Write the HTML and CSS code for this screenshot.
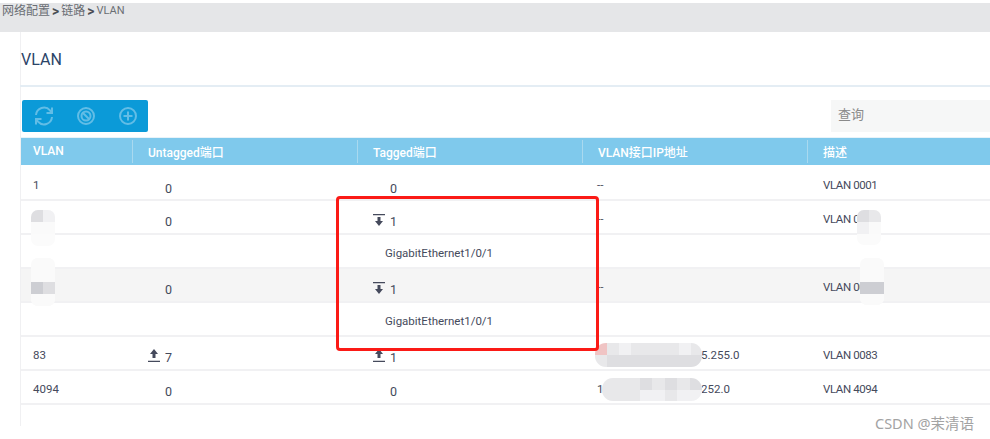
FILE: index.html
```html
<!DOCTYPE html>
<html lang="en">
<head>
    <meta charset="UTF-8">
    <meta name="viewport" content="width=device-width, initial-scale=1.0">
    <title>VLAN</title>
    <link rel="stylesheet" href="styles.css">
</head>
<body>
    <div class="breadcrumb">
        <span>网络配置</span><b>&gt;</b><span>链路</span><b>&gt;</b><span class="crumb-last">VLAN</span>
    </div>

    <div class="main">
        <h1>VLAN</h1>

        <div class="toolbar">
            <div class="btn-group">
                <svg width="20" height="22" viewBox="1 0 20 22" fill="none">
                    <path d="M3 10a8 8 0 0 1 14-4.600l1.500 2M19 12a8 8 0 0 1-14 4.600l-1.500-2"/>
                    <path d="M19 2.500v5.500h-5.500M3 19.500v-5.500h5.500"/>
                </svg>
                <svg width="20" height="20" viewBox="0 0 20 20" fill="none">
                    <circle cx="10" cy="10" r="8"/>
                    <circle cx="10" cy="10" r="4.500"/>
                    <path d="M6.500 6.500l7 7"/>
                </svg>
                <svg width="20" height="20" viewBox="0 0 20 20" fill="none">
                    <circle cx="10" cy="10" r="8"/>
                    <path d="M10 5.500v9M5.500 10h9"/>
                </svg>
            </div>
            <div class="search">查询</div>
        </div>

        <table class="vlan-table">
            <colgroup>
                <col class="col-id">
                <col class="col-port">
                <col class="col-port">
                <col class="col-port">
                <col class="col-desc">
            </colgroup>
            <thead>
                <tr>
                    <th>VLAN</th>
                    <th>Untagged端口</th>
                    <th>Tagged端口</th>
                    <th>VLAN接口IP地址</th>
                    <th>描述</th>
                </tr>
            </thead>
            <tbody>
                <tr>
                    <td>1</td>
                    <td class="num">0</td>
                    <td class="num">0</td>
                    <td>--</td>
                    <td class="desc">VLAN 0001</td>
                </tr>
                <tr>
                    <td></td>
                    <td class="num">0</td>
                    <td class="num">
                        <svg class="port-icon" width="13" height="14" viewBox="0 0 13 14"><path d="M0 1h12v1.300H0zM4.500 4h3v4H10l-4 5-4-5h2.500z"/></svg>1
                    </td>
                    <td>--</td>
                    <td class="desc">VLAN 0</td>
                </tr>
                <tr>
                    <td></td>
                    <td></td>
                    <td class="port-name">GigabitEthernet1/0/1</td>
                    <td></td>
                    <td></td>
                </tr>
                <tr class="selected">
                    <td></td>
                    <td class="num">0</td>
                    <td class="num">
                        <svg class="port-icon" width="13" height="14" viewBox="0 0 13 14"><path d="M0 1h12v1.300H0zM4.500 4h3v4H10l-4 5-4-5h2.500z"/></svg>1
                    </td>
                    <td>--</td>
                    <td class="desc">VLAN 00</td>
                </tr>
                <tr>
                    <td></td>
                    <td></td>
                    <td class="port-name">GigabitEthernet1/0/1</td>
                    <td></td>
                    <td></td>
                </tr>
                <tr>
                    <td>83</td>
                    <td class="num">
                        <svg class="port-icon" width="13" height="14" viewBox="0 0 13 14"><path d="M6 0l4 5H7.500v4h-3V5H2zM0 11.700h12V13H0z"/></svg>7
                    </td>
                    <td class="num">
                        <svg class="port-icon" width="13" height="14" viewBox="0 0 13 14"><path d="M6 0l4 5H7.500v4h-3V5H2zM0 11.700h12V13H0z"/></svg>1
                    </td>
                    <td><span class="ip-head"></span>5.255.0</td>
                    <td class="desc">VLAN 0083</td>
                </tr>
                <tr>
                    <td>4094</td>
                    <td class="num">0</td>
                    <td class="num">0</td>
                    <td><span class="ip-head">1</span>252.0</td>
                    <td class="desc">VLAN 4094</td>
                </tr>
            </tbody>
        </table>
    </div>

    <!-- mosaic patches pasted over the screenshot -->
    <div class="blur blur-a">
        <i class="s3"></i><i class="s1"></i><i class="s0"></i><i class="s0"></i>
    </div>
    <div class="blur blur-b">
        <i class="s0"></i><i class="s0"></i><i class="s0"></i><i class="s0"></i>
        <i class="s4"></i><i class="s3"></i><i class="s0"></i><i class="s0"></i>
    </div>
    <div class="blur blur-c">
        <i class="s3"></i><i class="s2"></i><i class="s1"></i><i class="s0"></i>
    </div>
    <div class="blur blur-d">
        <i class="s0"></i><i class="s0"></i><i class="s0"></i><i class="s0"></i>
        <i class="s4"></i><i class="s4"></i><i class="s0"></i><i class="s0"></i>
    </div>
    <div class="blur blur-ip blur-e">
        <i class="pink"></i><i class="s2"></i><i class="s1"></i><i class="s2"></i><i class="s2"></i><i class="s2"></i><i class="s2"></i><i class="s1"></i><i class="s2"></i>
        <i class="s2"></i><i class="s3"></i><i class="s3"></i><i class="s3"></i><i class="s3"></i><i class="s3"></i><i class="s3"></i><i class="s3"></i><i class="s3"></i>
    </div>
    <div class="blur blur-ip blur-f">
        <i class="s2"></i><i class="s2"></i><i class="s2"></i><i class="s3"></i><i class="s2"></i><i class="s3"></i><i class="s2"></i><i class="s3"></i>
        <i class="s2"></i><i class="s2"></i><i class="s2"></i><i class="s1"></i><i class="s1"></i><i class="s2"></i><i class="s1"></i><i class="s1"></i>
    </div>

    <div class="red-box"></div>
    <div class="watermark">CSDN @茉清语</div>
</body>
</html>
```

FILE: styles.css
```css
html, body {
    height: 439px;
    overflow: hidden;
}

body {
    margin: 0;
    background-color: white;
    color: #454a5c;
    font-family: Roboto, "Noto Sans CJK SC", sans-serif;
    font-size: 11.500px;
}

.breadcrumb {
    display: flex;
    align-items: flex-start;
    gap: 2px;
    height: 27px;
    margin-top: 3px;
    padding: 2px 0 0 2px;
    background-color: #e5e6e8;
    color: #6a6e74;
    font-size: 12px;
    line-height: 12px;
}

.breadcrumb b {
    color: #4a4e54;
    font-size: 14px;
}

.crumb-last {
    font-size: 11px;
}

.main {
    width: 970px;
    margin-left: 20px;
    padding-bottom: 21px;
    border-left: 1px solid #f0f0f2;
}

h1 {
    height: 18px;
    margin: 0 0 13px -1px;
    padding: 18px 0 17px 1px;
    border-bottom: 2px solid #e4edf4;
    color: #2b4468;
    font-size: 16px;
    font-weight: 400;
    line-height: 20px;
}

.toolbar {
    display: flex;
    justify-content: space-between;
    margin-bottom: 5px;
}

.btn-group {
    display: flex;
    align-items: center;
    gap: 22px;
    width: 126px;
    height: 32px;
    margin-left: 1px;
    padding-left: 12px;
    box-sizing: border-box;
    background-color: #0b9ad8;
    border-radius: 2px;
}

.btn-group svg {
    stroke: #62bde6;
    stroke-width: 2;
}

.search {
    width: 160px;
    height: 32px;
    padding-left: 7px;
    box-sizing: border-box;
    background-color: #f6f7f7;
    color: #8a8a8a;
    font-size: 13px;
    line-height: 30px;
}

.vlan-table {
    width: 969px;
    table-layout: fixed;
    border-collapse: collapse;
}

.col-id {
    width: 111px;
}

.col-port {
    width: 225px;
}

.vlan-table th {
    position: relative;
    height: 27px;
    padding: 0 0 0 16px;
    box-sizing: border-box;
    background-color: #7fc9ec;
    border-top: 1px solid #e8f3f9;
    color: white;
    font-size: 12px;
    font-weight: 500;
    text-align: left;
}

.vlan-table th:first-child {
    padding-left: 12px;
}

.vlan-table th + th::before {
    content: "";
    position: absolute;
    left: 0;
    top: 2px;
    bottom: 2px;
    width: 1px;
    background-color: #a9d9ef;
}

.vlan-table td {
    height: 34px;
    padding: 10px 0 0 15px;
    box-sizing: border-box;
    border-bottom: 2px solid #f1f1f3;
    vertical-align: top;
    line-height: 16px;
}

.vlan-table td:first-child {
    padding-left: 12px;
}

.vlan-table tbody tr:first-child td {
    height: 35px;
    padding-top: 12px;
}

.vlan-table td.num {
    padding-top: 13px;
    padding-left: 33px;
    font-size: 12.500px;
}

.vlan-table tbody tr:first-child td.num {
    padding-top: 16px;
}

.vlan-table td.port-name {
    padding-left: 28px;
}

.vlan-table td.desc {
    padding-left: 16px;
    letter-spacing: -0.400px;
}

.ip-head {
    display: inline-block;
    width: 104px;
}

.selected td {
    background-color: #f5f5f5;
}

.port-icon {
    position: absolute;
    margin-left: -17px;
    margin-top: -1px;
    fill: #454a5c;
}

/* overlays */
.red-box {
    position: absolute;
    left: 336px;
    top: 196px;
    width: 257px;
    height: 149px;
    border: 3px solid #fb1a16;
    border-radius: 4px;
}

.watermark {
    position: absolute;
    left: 875px;
    top: 414px;
    color: #a3a3a3;
    font-family: "Noto Sans", "Noto Sans CJK SC", sans-serif;
    font-size: 14.500px;
    line-height: 18px;
}

.blur {
    position: absolute;
    display: grid;
    grid-template-columns: repeat(2, 12px);
    grid-auto-rows: 12px;
    overflow: hidden;
    background-color: #fbfbfb;
    border-radius: 7px;
}

.blur-a {
    left: 31px;
    top: 210px;
    height: 36px;
}

.blur-b {
    left: 31px;
    top: 258px;
    height: 48px;
}

.blur-c {
    left: 857px;
    top: 210px;
    height: 35px;
}

.blur-d {
    left: 860px;
    top: 258px;
    height: 47px;
}

.blur-ip {
    grid-template-columns: repeat(9, 12px);
    border-radius: 11px;
}

.blur-e {
    left: 595px;
    top: 343px;
    width: 107px;
    height: 24px;
}

.blur-f {
    grid-template-columns: repeat(8, 12.500px);
    left: 602px;
    top: 378px;
    width: 100px;
    height: 23px;
}

.s0 { background-color: #fafafa; }
.s1 { background-color: #f1f1f3; }
.s2 { background-color: #e8e8ea; }
.s3 { background-color: #dedee1; }
.s4 { background-color: #cdced3; }
.pink { background-color: #f0c4c4; }
```
